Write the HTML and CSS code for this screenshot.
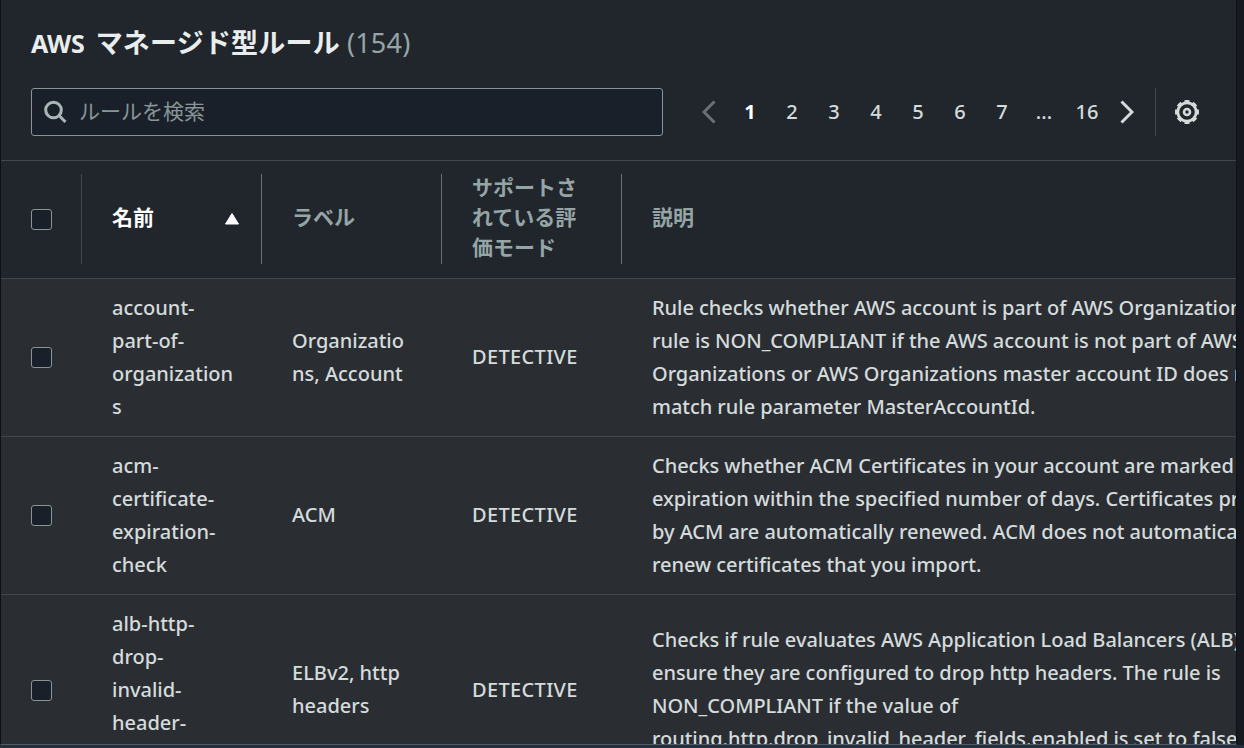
FILE: index.html
```
<!DOCTYPE html>
<html lang="ja">
<head>
	<title>AWS マネージド型ルール</title>
	<meta charset="UTF-8">
	<link rel="stylesheet" href="styles.css">
</head>

<body>
	<main class="panel">
		<header class="panel-header">
			<h2><span class="latin">AWS</span> <span class="title">マネージド型ルール</span> <span class="count">(154)</span></h2>
			<div class="tools">
				<div class="search">
					<svg class="search-icon" width="24" height="24" viewBox="0 0 24 24">
						<circle cx="9.500" cy="10" r="7.800"/>
						<path d="M15 15.500l6.500 6.500"/>
					</svg>
					<input type="text" placeholder="ルールを検索">
				</div>
				<nav class="pages">
					<svg class="arrow prev" width="14" height="24" viewBox="0 0 14 24"><path d="M12.500 1.500L2 12l10.500 10.500"/></svg>
					<span class="page current">1</span>
					<span class="page">2</span>
					<span class="page">3</span>
					<span class="page">4</span>
					<span class="page">5</span>
					<span class="page">6</span>
					<span class="page">7</span>
					<span class="page">...</span>
					<span class="page last">16</span>
					<svg class="arrow" width="14" height="24" viewBox="0 0 14 24"><path d="M1.500 1.500L12 12 1.500 22.500"/></svg>
				</nav>
				<div class="settings">
					<svg width="26" height="26" viewBox="0 0 26 26">
						<circle class="ring" cx="13" cy="13" r="9.2"/>
						<circle class="teeth" cx="13" cy="13" r="10.800" pathLength="80"/>
						<circle class="hub" cx="13" cy="13" r="3"/>
					</svg>
				</div>
			</div>
		</header>

		<div class="row head">
			<div class="cell check"><span class="box"></span></div>
			<div class="cell sorted"><span>名前</span>
				<svg width="16" height="14" viewBox="0 0 16 14"><path d="M8 1.500L14.500 12h-13z"/></svg>
			</div>
			<div class="cell"><span>ラベル</span></div>
			<div class="cell"><span>サポートさ<br>れている評<br>価モード</span></div>
			<div class="cell desc"><span>説明</span></div>
		</div>

		<div class="row">
			<div class="cell check"><span class="box"></span></div>
			<div class="cell">account-<br>part-of-<br>organization<br>s</div>
			<div class="cell">Organizatio<br>ns, Account</div>
			<div class="cell mode">DETECTIVE</div>
			<div class="cell desc">Rule checks whether AWS account is part of AWS Organizations. The<br>rule is NON_COMPLIANT if the AWS account is not part of AWS<br>Organizations or AWS Organizations master account ID does not<br>match rule parameter MasterAccountId.</div>
		</div>
		<div class="row">
			<div class="cell check"><span class="box"></span></div>
			<div class="cell">acm-<br>certificate-<br>expiration-<br>check</div>
			<div class="cell label">ACM</div>
			<div class="cell mode">DETECTIVE</div>
			<div class="cell desc">Checks whether ACM Certificates in your account are marked for<br>expiration within the specified number of days. Certificates provided<br>by ACM are automatically renewed. ACM does not automatically<br>renew certificates that you import.</div>
		</div>
		<div class="row tall">
			<div class="cell check"><span class="box"></span></div>
			<div class="cell">alb-http-<br>drop-<br>invalid-<br>header-<br>enabled</div>
			<div class="cell label">ELBv2, http<br>headers</div>
			<div class="cell mode">DETECTIVE</div>
			<div class="cell desc">Checks if rule evaluates AWS Application Load Balancers (ALB) to<br>ensure they are configured to drop http headers. The rule is<br>NON_COMPLIANT if the value of<br>routing.http.drop_invalid_header_fields.enabled is set to false</div>
		</div>
	</main>
</body>
</html>
```
FILE: styles.css
```
* {
    box-sizing: border-box;
}

body {
    margin: 0;
    height: 748px;
    overflow: hidden;
    background-color: #16191f;
    border-bottom: 3px solid #232f3e;
    font-family: "Noto Sans", "Noto Sans CJK JP", sans-serif;
    font-size: 20px;
    font-weight: 500;
    color: #d5dbdb;
}

.panel {
    width: 1237px;
    height: 745px;
    overflow: hidden;
    background-color: #2a2e33;
    border-left: 1px solid #0e1013;
    border-right: 1px solid #0e1013;
    border-bottom: 1px solid #545b64;
}

.panel-header {
    height: 161px;
    padding: 25px 30px 0;
    background-color: #21252c;
    border-bottom: 1px solid #414750;
}

h2 {
    display: flex;
    align-items: center;
    gap: 7px;
    margin: 0;
    height: 36px;
    font-size: 27px;
    line-height: 36px;
    color: #eaeded;
}

.latin {
    margin-right: 4px;
    font-size: 25px;
    letter-spacing: -0.2px;
}

.title {
    letter-spacing: 0.2px;
}

.count {
    color: #95a5a6;
    font-weight: normal;
    letter-spacing: 0.2px;
}

.tools {
    display: flex;
    margin-top: 27px;
    height: 48px;
}

.search {
    display: flex;
    align-items: center;
    width: 632px;
    padding-left: 12px;
    gap: 11px;
    background-color: #1a2029;
    border: 1px solid #879596;
    border-radius: 3px;
}

.search-icon {
    fill: none;
    stroke: #aab7b8;
    stroke-width: 3;
}

.search input {
    flex: 1;
    height: 40px;
    padding: 0 0 4px;
    background: none;
    border: none;
    outline: none;
    color: #d5dbdb;
    font-family: "Noto Sans CJK JP", sans-serif;
    font-size: 21px;
}

.search input::placeholder {
    color: #879596;
    opacity: 1;
}

.pages {
    display: flex;
    align-items: center;
    margin-left: 39px;
}

.page {
    width: 42px;
    padding-bottom: 2px;
    text-align: center;
}

.current {
    color: #fff;
    font-weight: bold;
}

.last {
    width: 44px;
}

.pages .current {
    margin-left: 13px;
}

.arrow {
    fill: none;
    stroke: #d5dbdb;
    stroke-width: 3;
    margin-left: 11px;
}

.prev {
    stroke: #687078;
    margin-left: 0;
}

.settings {
    display: flex;
    align-items: center;
    margin-left: 21px;
    padding-left: 18px;
    border-left: 1px solid #414750;
}

.settings svg {
    fill: none;
    stroke: #d5dbdb;
}

.ring {
    stroke-width: 2.8;
}

/* 8 teeth round the ring */
.teeth {
    stroke-width: 2.4;
    stroke-dasharray: 6 4;
    stroke-dashoffset: 3;
}

.hub {
    stroke-width: 2.6;
}

.row {
    display: flex;
    width: 1400px;
    padding: 12px 0 13px;
    border-bottom: 1px solid #414750;
    line-height: 33px;
}

.cell {
    display: flex;
    align-items: center;
    flex: none;
    width: 180px;
    padding-left: 30px;
    white-space: nowrap;
}

.check {
    width: 81px;
}

.label {
    padding-bottom: 2px;
}

.mode {
    padding-bottom: 2px;
    letter-spacing: 0.35px;
}

.desc {
    width: 700px;
    letter-spacing: -0.04px;
}

.tall .desc {
    padding-bottom: 2px;
}

.tall .check {
    padding-top: 1px;
}

.tall .mode {
    padding-bottom: 0;
}

.box {
    width: 21px;
    height: 21px;
    background-color: #1a2029;
    border: 1px solid #879596;
    border-radius: 3px;
}

.head {
    padding: 13px 0 14px;
    background-color: #21252c;
    line-height: 30px;
    font-size: 21px;
    font-weight: bold;
    color: #95a5a6;
}

.head .cell {
    height: 90px;
    border-right: 1px solid #687078;
}

.head .cell span:not(.box) {
    padding-bottom: 4px;
}

.head .check {
    border-color: #414750;
}

.head .desc {
    border: none;
}

.sorted {
    justify-content: space-between;
    padding-right: 21px;
    color: #fff;
}

.sorted svg {
    fill: #fff;
    stroke: #fff;
    stroke-linejoin: round;
}
```
